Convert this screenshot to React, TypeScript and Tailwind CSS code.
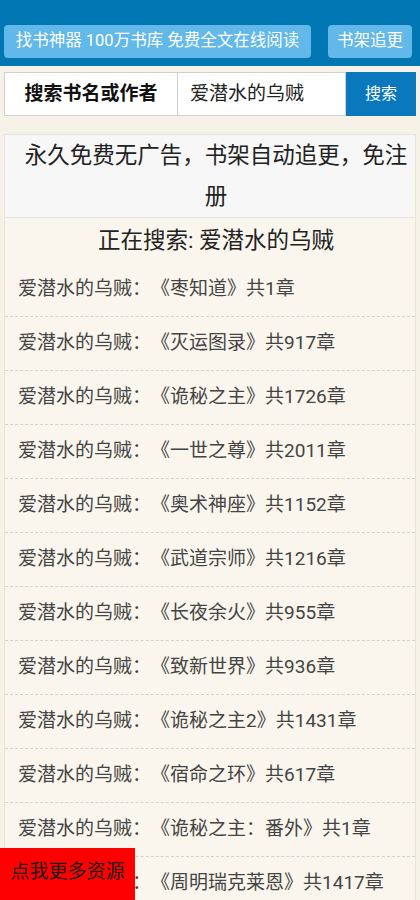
import React from "react";

const books = [
  { title: "枣知道", chapters: 1 },
  { title: "灭运图录", chapters: 917 },
  { title: "诡秘之主", chapters: 1726 },
  { title: "一世之尊", chapters: 2011 },
  { title: "奥术神座", chapters: 1152 },
  { title: "武道宗师", chapters: 1216 },
  { title: "长夜余火", chapters: 955 },
  { title: "致新世界", chapters: 936 },
  { title: "诡秘之主2", chapters: 1431 },
  { title: "宿命之环", chapters: 617 },
  { title: "诡秘之主：番外", chapters: 1 },
  { title: "周明瑞克莱恩", chapters: 1417 },
];

const author = "爱潜水的乌贼";

export default function App() {
  return (
    <div
      className="min-h-screen bg-[#f6f2e8] text-[#222]"
      style={{ fontFamily: 'Roboto, "Noto Sans CJK SC", sans-serif' }}
    >
      {/* Top bar */}
      <div className="flex items-center justify-between bg-[#0077b3] pl-[4px] pr-[8px] pt-[25px] pb-[8px]">
        <button className="h-[33px] w-[307px] rounded-[4px] bg-[#62b8e8] text-[16.5px] text-white">
          找书神器 100万书库 免费全文在线阅读
        </button>
        <button className="h-[33px] w-[84px] rounded-[4px] bg-[#62b8e8] text-[16.5px] text-white">
          书架追更
        </button>
      </div>

      {/* Search row */}
      <div className="mx-[4px] mt-[6px] flex h-[44px]">
        <div className="flex w-[174px] items-center justify-center border border-[#cfcfcf] bg-white text-[19px] font-bold text-[#111]">
          搜索书名或作者
        </div>
        <div className="flex flex-1 items-center border border-l-0 border-[#cfcfcf] bg-white pl-[12px] text-[19px] text-[#222]">
          {author}
        </div>
        <button className="w-[70px] bg-[#0a78bd] text-[16px] text-white">搜索</button>
      </div>

      {/* Content */}
      <div className="mx-[4px] mt-[18px] border-x border-[#ebe5d7] bg-[#faf6ed]">
        <div className="border-y border-[#e4e4e4] bg-[#f7f7f7] pl-[16px] pr-[4px] text-center text-[22.5px] leading-[41px] text-[#222]">
          永久免费无广告，书架自动追更，免注册
        </div>
        <div className="pl-[12px] text-center text-[22.5px] leading-[45px] text-[#222]">
          正在搜索: {author}
        </div>
        <ul>
          {books.map((b) => (
            <li
              key={b.title}
              className="flex h-[54px] items-center border-b border-dashed border-[#d2d2d2] pl-[13px] text-[19px] text-[#444]"
            >
              <span>{author}：</span>
              <span>
                《{b.title}》共{b.chapters}章
              </span>
            </li>
          ))}
        </ul>
      </div>

      {/* Floating link */}
      <div className="fixed bottom-0 left-0 h-[52px] w-[135px] bg-[#ff0000] text-center text-[19px] leading-[48px] text-[#1a1a1a]">
        点我更多资源
      </div>
    </div>
  );
}
